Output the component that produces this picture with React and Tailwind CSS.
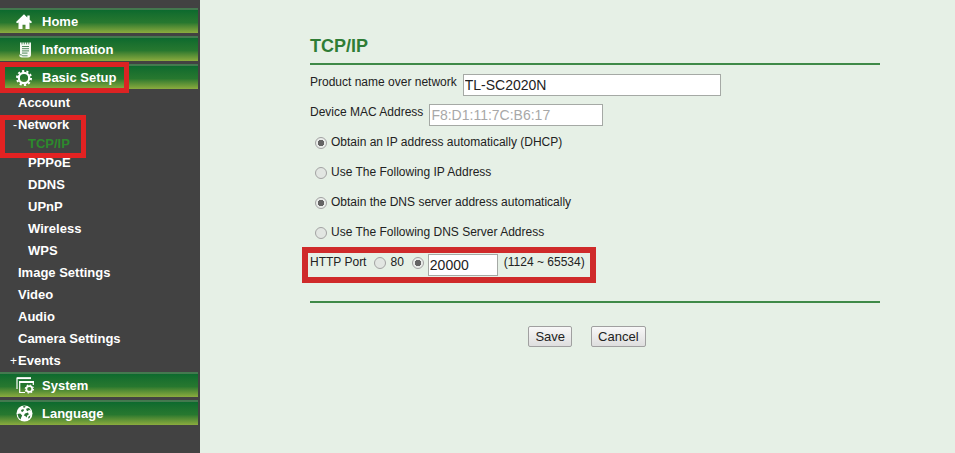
import React, { useState } from 'react';

const HomeIcon = () => (
    <svg viewBox="0 0 16 16" className="w-4 h-4" fill="#fff" aria-hidden="true">
        <path d="M8 0.3 L0 8 L1 9.2 L2.5 8.6 V15 H6.5 V10.8 H9.5 V15 H13.5 V8.6 L15 9.2 L16 8 L13.7 5.8 V1.5 H11.3 V3.5 Z" />
    </svg>
);

const InfoIcon = () => (
    <svg viewBox="0 0 16 16" className="w-4 h-4" aria-hidden="true">
        <path d="M4 0.5 H15 V12.5 Q15 15.5 12 15.5 H6 Q3 15.5 3.2 12.5 H4 Z" fill="#f4f8f2" />
        <path d="M6 0 V2.4 M8.3 0 V2.4 M10.6 0 V2.4 M12.8 0 V2.4" stroke="#2d7a40" strokeWidth="0.8" />
        <path d="M6 4.5 H13 M6 6.7 H13 M6 8.9 H13 M6 11.1 H11.5" stroke="#3c7d48" strokeWidth="0.9" />
        <path d="M3.4 12.8 Q6 12.2 6.4 13.8 H11.6" stroke="#3c7d48" strokeWidth="0.8" fill="none" />
    </svg>
);

const GearIcon = () => (
    <svg viewBox="0 0 16 16" className="w-4 h-4" fill="none" stroke="#fff" aria-hidden="true">
        <circle cx="8" cy="8" r="5.2" strokeWidth="2.2" />
        <circle cx="8" cy="8" r="7" strokeWidth="2" strokeDasharray="2.2 2.198" />
    </svg>
);

const SystemIcon = () => (
    <svg viewBox="0 0 19 17" className="w-[19px] h-[17px]" fill="none" stroke="#fff" aria-hidden="true">
        <path d="M1 12 V1.2 H15" strokeWidth="1.2" />
        <path d="M1 1.2 H15" strokeWidth="1.8" />
        <path d="M9 15.5 H3.7 V4.5 H17.3 V8" strokeWidth="1.2" />
        <path d="M3.2 5 H17.8" strokeWidth="2" />
        <circle cx="13.3" cy="12" r="2.9" strokeWidth="1.6" />
        <circle cx="13.3" cy="12" r="4" strokeWidth="1.2" strokeDasharray="1.6 1.54" />
    </svg>
);

const GlobeIcon = () => (
    <svg viewBox="0 0 17 17" className="w-[17px] h-[17px]" aria-hidden="true">
        <circle cx="8.5" cy="8.5" r="8" fill="#fff" />
        <g fill="#2a7434">
            <path d="M7 1.2 L9.5 1 L9 2.6 L7.6 2.8 Z" />
            <path d="M10.5 3.5 L13 3 L14.8 5.6 L13 5 L11.5 6.2 L10.2 5 Z" />
            <path d="M5 5 L7.3 4 L8 5.6 L6.4 7 L5.4 6.4 Z" />
            <path d="M1.5 9 L4.2 8.6 L6.2 10.4 L5.2 12.4 L4.6 14.4 L2.6 12.4 Z" />
            <path d="M9 8.4 L12 7.6 L12.8 9.4 L11.2 10.4 L10.6 12.6 L9.2 11 L7.8 10.4 Z" />
            <path d="M12.6 11.6 L14.4 10.6 L13.6 13 L12 13.6 Z" />
        </g>
    </svg>
);

const subMenu = [
    { label: 'DDNS', nested: true },
    { label: 'UPnP', nested: true },
    { label: 'Wireless', nested: true },
    { label: 'WPS', nested: true },
    { label: 'Image Settings' },
    { label: 'Video' },
    { label: 'Audio' },
    { label: 'Camera Settings' },
    { label: 'Events', mark: '+' },
];

const MenuBar = ({ icon, label }) => (
    <a
        href="#"
        className="flex items-center h-[25px] mr-[2px] pl-4 border-t-2 border-[#43794f] bg-linear-to-b from-[#0c6a2e] via-[#27782f] via-55% to-[#8bac3e] text-white"
    >
        <span className="flex w-[26px]">{icon}</span>
        <span>{label}</span>
    </a>
);

const MenuItem = ({ label, mark, nested }) => (
    <a href="#" className={`flex items-center h-[22px] text-white ${nested ? 'pl-7' : ''}`}>
        {!nested && <span className="w-[18px] pr-px text-right text-xs font-normal">{mark}</span>}
        {label}
    </a>
);

const Sidebar = () => (
    <nav className="w-[200px] shrink-0 pt-2 bg-[#424242] text-[13px] leading-4 font-bold">
        <div className="flex flex-col gap-[3px]">
            <MenuBar icon={<HomeIcon />} label="Home" />
            <MenuBar icon={<InfoIcon />} label="Information" />
            <div className="relative">
                <MenuBar icon={<GearIcon />} label="Basic Setup" />
                <div className="absolute left-0 -top-[2px] w-[129px] h-[31px] border-[5px] border-[#dc2323] pointer-events-none" />
            </div>
        </div>

        <div className="pt-[3px]">
            <MenuItem label="Account" />
            <div className="relative">
                <MenuItem label="Network" mark="-" />
                <a href="#" className="flex items-center h-4 pl-7 text-[#2c8a2c]">TCP/IP</a>
                <div className="absolute left-0 top-px z-10 w-[86px] h-[43px] border-[5px] border-[#e32222] pointer-events-none" />
            </div>
            <MenuItem label="PPPoE" nested />
            {subMenu.map((item) => (
                <MenuItem key={item.label} {...item} />
            ))}
        </div>

        <div className="flex flex-col gap-[3px]">
            <MenuBar icon={<SystemIcon />} label="System" />
            <MenuBar icon={<GlobeIcon />} label="Language" />
        </div>
    </nav>
);

const Radio = (props) => (
    <input
        type="radio"
        className="appearance-none shrink-0 w-3 h-3 mt-[3px] rounded-full border border-[#a3a3a3] bg-[#e2e6e2] checked:bg-[radial-gradient(circle,#646464_0_3px,#e9ece9_3px)]"
        {...props}
    />
);

const RadioRow = ({ id, name, label, checked, onChange }) => (
    <div className="flex items-start h-[22px] pl-[5px] gap-1">
        <Radio id={id} name={name} checked={checked} onChange={onChange} />
        <label htmlFor={id}>{label}</label>
    </div>
);

const textBox = 'h-[22px] px-px border border-[#a5a9a5] bg-white text-sm';
const formButton = 'h-[21px] px-[6px] border border-[#a0a0a0] rounded-xs bg-linear-to-b from-[#f8f8f8] to-[#dedede] text-[13px] leading-4';

const App = () => {
    const [productName, setProductName] = useState('TL-SC2020N');
    const [ipMode, setIpMode] = useState('dhcp');
    const [dnsMode, setDnsMode] = useState('auto');
    const [portMode, setPortMode] = useState('custom');
    const [port, setPort] = useState('20000');

    return (
        <div className="flex min-h-screen bg-[#e6f0e6] font-['Liberation_Sans',Arial,sans-serif] text-[#222]">
            <Sidebar />

            <main className="flex-1 pl-[110px] pr-[75px] pt-9 text-xs leading-4">
                <h1 className="pb-[7px] border-b-2 border-[#3f8a48] text-lg leading-5 font-bold text-[#2f7d36]">TCP/IP</h1>

                <form className="pt-[9px]" onSubmit={(e) => e.preventDefault()}>
                    <div className="flex flex-col gap-2">
                        <div className="flex items-start gap-[6px]">
                            <label htmlFor="productName">Product name over network</label>
                            <input
                                id="productName"
                                type="text"
                                className={`${textBox} w-[258px]`}
                                value={productName}
                                onChange={(e) => setProductName(e.target.value)}
                            />
                        </div>
                        <div className="flex items-start gap-[6px]">
                            <label htmlFor="mac">Device MAC Address</label>
                            <input id="mac" type="text" className={`${textBox} w-[174px] text-[#a8a8a8]`} value="F8:D1:11:7C:B6:17" disabled />
                        </div>

                        <RadioRow id="dhcp" name="ip" label="Obtain an IP address automatically (DHCP)" checked={ipMode === 'dhcp'} onChange={() => setIpMode('dhcp')} />
                        <RadioRow id="static" name="ip" label="Use The Following IP Address" checked={ipMode === 'static'} onChange={() => setIpMode('static')} />
                        <RadioRow id="dnsAuto" name="dns" label="Obtain the DNS server address automatically" checked={dnsMode === 'auto'} onChange={() => setDnsMode('auto')} />
                        <RadioRow id="dnsManual" name="dns" label="Use The Following DNS Server Address" checked={dnsMode === 'manual'} onChange={() => setDnsMode('manual')} />

                        {/* HTTP port */}
                        <div className="relative flex items-start gap-1">
                            <span className="pr-1">HTTP Port</span>
                            <Radio id="port80" name="port" checked={portMode === '80'} onChange={() => setPortMode('80')} />
                            <label htmlFor="port80" className="pr-1">80</label>
                            <Radio name="port" aria-label="Custom port" checked={portMode === 'custom'} onChange={() => setPortMode('custom')} />
                            <input
                                type="text"
                                aria-label="Port number"
                                className={`${textBox} w-[70px]`}
                                value={port}
                                onChange={(e) => setPort(e.target.value)}
                            />
                            <span className="pl-[2px]">(1124 ~ 65534)</span>
                            <div className="absolute -left-2 -top-[7px] w-[294px] h-9 border-[6px] border-[#cf2a2a] pointer-events-none" />
                        </div>
                    </div>

                    <div className="mt-[25px] pt-[23px] pr-4 border-t-2 border-[#3f8a48] flex justify-center gap-[19px]">
                        <button type="submit" className={formButton}>Save</button>
                        <button type="button" className={formButton}>Cancel</button>
                    </div>
                </form>
            </main>
        </div>
    );
};

export default App;
